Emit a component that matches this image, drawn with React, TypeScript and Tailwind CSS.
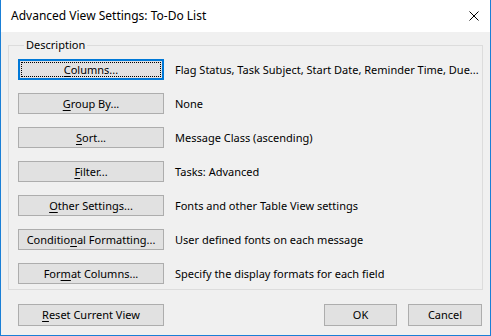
const rows = [
  { pre: '', key: 'C', post: 'olumns...', desc: 'Flag Status, Task Subject, Start Date, Reminder Time, Due...', focused: true },
  { pre: '', key: 'G', post: 'roup By...', desc: 'None' },
  { pre: '', key: 'S', post: 'ort...', desc: 'Message Class (ascending)' },
  { pre: '', key: 'F', post: 'ilter...', desc: 'Tasks: Advanced' },
  { pre: '', key: 'O', post: 'ther Settings...', desc: 'Fonts and other Table View settings' },
  { pre: 'Conditio', key: 'n', post: 'al Formatting...', desc: 'User defined fonts on each message' },
  { pre: 'For', key: 'm', post: 'at Columns...', desc: 'Specify the display formats for each field' },
]

function Label({ pre, k, post }: { pre: string; k: string; post: string }) {
  return (
    <span className="whitespace-nowrap">
      {pre}
      <u className="underline-offset-2">{k}</u>
      {post}
    </span>
  )
}

export default function App() {
  return (
    <div className="w-[491px] h-[336px] flex flex-col bg-[#f0f0f0] border-x border-b border-[#1a7fd6] text-[11px] text-black font-['Noto_Sans',sans-serif] leading-4 overflow-hidden">
      <div className="h-[32px] bg-white flex items-center justify-between pl-[10px] pr-[10px] shrink-0 text-[12px]">
        <span>Advanced View Settings: To-Do List</span>
        <svg width="10" height="10" viewBox="0 0 10 10" className="mr-[1px]">
          <path d="M0.5 0.5L9.5 9.5M9.5 0.5L0.5 9.5" stroke="#000" strokeWidth="1" />
        </svg>
      </div>
      <div className="flex flex-col px-[7px]">
        <fieldset className="mt-[5px] border border-[#dcdcdc] pl-[9px] pt-[6px] pb-[5px] flex flex-col gap-[13px]">
          <legend className="ml-[6px] px-[2px]">Description</legend>
          {rows.map((r) => (
            <div key={r.desc} className="flex items-center gap-[11px] whitespace-nowrap">
              {r.focused ? (
                <div className="w-[146px] h-[21px] border-2 border-[#0078d7] bg-[#e1e1e1] p-[1px]">
                  <div className="w-full h-full border border-dotted border-black flex items-center justify-center">
                    <Label pre={r.pre} k={r.key} post={r.post} />
                  </div>
                </div>
              ) : (
                <div className="w-[146px] h-[21px] border border-[#adadad] bg-[#e1e1e1] flex items-center justify-center">
                  <Label pre={r.pre} k={r.key} post={r.post} />
                </div>
              )}
              <span>{r.desc}</span>
            </div>
          ))}
        </fieldset>
        <div className="flex items-center mt-[14px] pl-[10px] pr-[1px]">
          <div className="w-[146px] h-[22px] border border-[#adadad] bg-[#e1e1e1] flex items-center justify-center">
            <Label pre="" k="R" post="eset Current View" />
          </div>
          <div className="ml-auto flex gap-[11px]">
            <div className="w-[73px] h-[22px] border border-[#adadad] bg-[#e1e1e1] flex items-center justify-center">OK</div>
            <div className="w-[74px] h-[22px] border border-[#adadad] bg-[#e1e1e1] flex items-center justify-center">Cancel</div>
          </div>
        </div>
      </div>
    </div>
  )
}
